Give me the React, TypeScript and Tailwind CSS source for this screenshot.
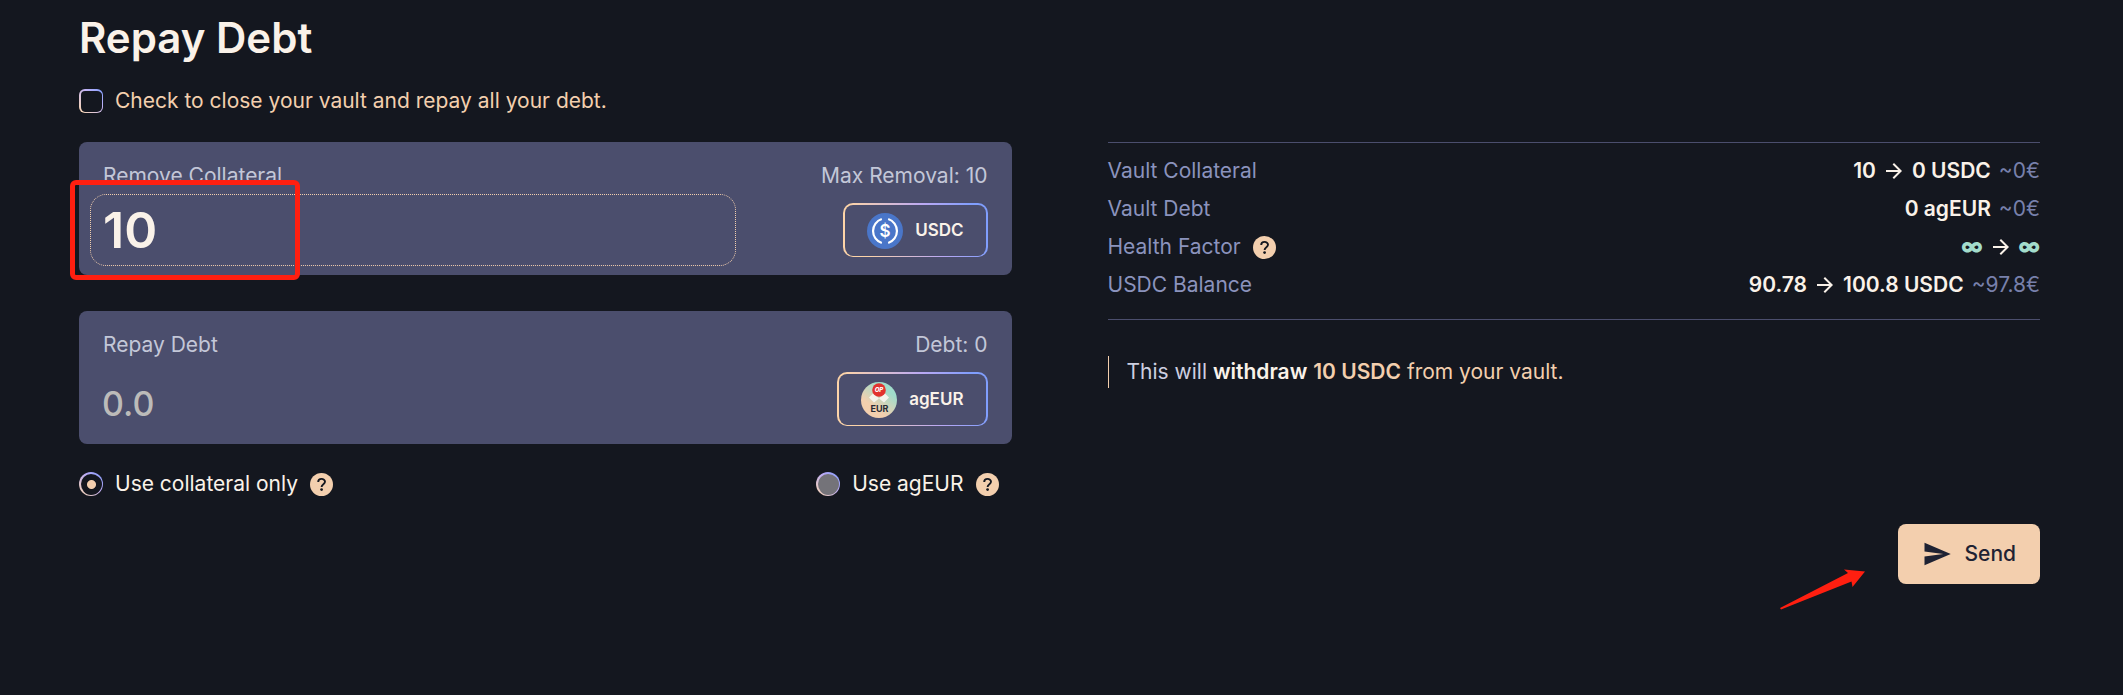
import { useState } from "react";
import { MdArrowForward, MdSend } from "react-icons/md";

export default function App() {
  const [closeVault, setCloseVault] = useState(false);
  const [collateral, setCollateral] = useState("10");
  const [debt, setDebt] = useState("");
  const [source, setSource] = useState("collateral");

  return (
    <main className="min-h-screen bg-[#14171f] pt-3 pr-[83px] pb-12 pl-[79px] font-['Inter','Liberation_Sans',sans-serif] text-[21px] text-[#faf2e9]">
      <h1 className="text-[42px] leading-[52px] font-semibold">Repay Debt</h1>

      <label className="mt-[25px] flex h-6 w-fit items-center gap-3 text-[#f3cfae]">
        <input
          type="checkbox"
          checked={closeVault}
          onChange={(e) => setCloseVault(e.target.checked)}
          className="h-6 w-6 appearance-none rounded-md border border-t-2 border-l-2 border-transparent [background:linear-gradient(#14171f,#14171f)_padding-box,linear-gradient(45deg,#fdd9ae,#c5b5f5_60%,#7f9cff)_border-box] checked:[background:linear-gradient(#f3cfae,#f3cfae)_padding-box,linear-gradient(45deg,#fdd9ae,#c5b5f5_60%,#7f9cff)_border-box]"
        />
        Check to close your vault and repay all your debt.
      </label>

      <div className="mt-[29px] grid grid-cols-2 gap-24">
        {/* Amounts */}
        <section>
          <div className="relative rounded-lg bg-[#4b4e6d] pt-5 pb-[9px]">
            <div className="flex justify-between px-6 leading-7 text-[#c3c7d8]">
              <label htmlFor="collateral">Remove Collateral</label>
              <span>Max Removal: 10</span>
            </div>
            <div className="mt-1 flex items-center justify-between pr-6 pl-[11px]">
              <input
                id="collateral"
                value={collateral}
                onChange={(e) => setCollateral(e.target.value)}
                className="h-[72px] w-[72%] rounded-2xl border border-dotted border-[#f3cfae] bg-transparent px-3 text-[50px] font-semibold outline-none"
              />
              <TokenButton icon={<UsdcIcon />} label="USDC" />
            </div>
            {/* Highlight around the amount */}
            <div className="pointer-events-none absolute top-[38px] -left-[9px] h-[100px] w-[230px] rounded-md border-5 border-[#ff1f10]" />
          </div>

          <div className="mt-9 rounded-lg bg-[#4b4e6d] pt-5 pb-[9px]">
            <div className="flex justify-between px-6 leading-7 text-[#c3c7d8]">
              <label htmlFor="debt">Repay Debt</label>
              <span>Debt: 0</span>
            </div>
            <div className="mt-1 flex items-center justify-between pr-6 pl-[11px]">
              <input
                id="debt"
                placeholder="0.0"
                value={debt}
                onChange={(e) => setDebt(e.target.value)}
                className="h-[72px] w-[70%] bg-transparent px-3 pt-2 text-[34px] font-medium outline-none placeholder:text-[#bcbbb9]"
              />
              <TokenButton icon={<AgEurIcon />} label="agEUR" />
            </div>
          </div>

          <div className="mt-7 flex h-6 items-center justify-between pr-[13px]">
            <SourceOption
              label="Use collateral only"
              checked={source === "collateral"}
              onSelect={() => setSource("collateral")}
            />
            <SourceOption
              label="Use agEUR"
              checked={source === "ageur"}
              onSelect={() => setSource("ageur")}
            />
          </div>
        </section>

        {/* Summary */}
        <section>
          <dl className="border-y border-[#4b4e6d] pt-[9px] pb-[15px]">
            <SummaryRow label="Vault Collateral">
              <b className="font-semibold">10</b>
              <Arrow />
              <b className="font-semibold">0 USDC</b>
              <Approx value="~0€" />
            </SummaryRow>
            <SummaryRow label="Vault Debt">
              <b className="font-semibold">0 agEUR</b>
              <Approx value="~0€" />
            </SummaryRow>
            <SummaryRow label="Health Factor" help>
              <b className="font-black text-[#a3dccb]">∞</b>
              <Arrow />
              <b className="font-black text-[#a3dccb]">∞</b>
            </SummaryRow>
            <SummaryRow label="USDC Balance">
              <b className="font-semibold">90.78</b>
              <Arrow />
              <b className="font-semibold">100.8 USDC</b>
              <Approx value="~97.8€" />
            </SummaryRow>
          </dl>
          <p className="mt-9 border-l border-[#f3cfae] pl-[18px] leading-8 text-[#f3cfae]">
            <span className="text-[#cdcfe0]">This will</span> <b className="font-semibold text-[#faf2e9]">withdraw</b>{" "}
            <b className="font-semibold">10 USDC</b> from your vault.
          </p>
        </section>
      </div>

      <div className="mt-7 flex justify-end">
        <div className="relative">
          <button
            type="button"
            className="flex h-[60px] items-center gap-3 rounded-lg bg-[#f3cfae] px-6 font-medium text-[#1e2233]"
          >
            <MdSend className="size-[30px]" />
            Send
          </button>
          {/* Pointer to the send button */}
          <svg className="absolute top-[43px] -left-[120px]" width="90" height="46" viewBox="0 0 90 46" fill="#ff1f10">
            <path d="M2 41 L70 6 L66 2.500 L87 4.500 L74.500 20 L73.500 14.500 L3 42.500 Z" />
          </svg>
        </div>
      </div>
    </main>
  );
}

function TokenButton({ icon, label }: { icon: React.ReactNode; label: string }) {
  return (
    <button
      type="button"
      className="flex h-[54px] items-center gap-3 rounded-[10px] border-2 border-b border-transparent px-[22px] text-[17px] font-semibold [background:linear-gradient(#4b4e6d,#4b4e6d)_padding-box,linear-gradient(70deg,#fdd4a8,#fdd4a8_15%,#bba9f3_60%,#809efd_90%)_border-box]"
    >
      {icon}
      {label}
    </button>
  );
}

function SourceOption({ label, checked, onSelect }: { label: string; checked: boolean; onSelect: () => void }) {
  return (
    <div className="flex items-center gap-3">
      <label className="flex items-center gap-3">
        <input
          type="radio"
          name="source"
          checked={checked}
          onChange={onSelect}
          className="h-6 w-6 appearance-none rounded-full border border-t-2 border-l-2 border-transparent [background:linear-gradient(#747379,#747379)_padding-box,linear-gradient(45deg,#fdd9ae,#b9aaf5_60%,#7f9cff)_border-box] checked:[background:radial-gradient(circle,#f3cfae_4px,#14171f_5px)_padding-box,linear-gradient(45deg,#fdd9ae,#b9aaf5_60%,#7f9cff)_border-box]"
        />
        {label}
      </label>
      <HelpIcon />
    </div>
  );
}

function SummaryRow({ label, help = false, children }: { label: string; help?: boolean; children: React.ReactNode }) {
  return (
    <div className="flex h-[38px] items-center justify-between">
      <dt className="flex items-center gap-3 text-[#8b93bd]">
        {label}
        {help && <HelpIcon />}
      </dt>
      <dd className="flex items-center">{children}</dd>
    </div>
  );
}

function HelpIcon() {
  return (
    <svg width="23" height="23" viewBox="0 0 23 23">
      <circle cx="11.500" cy="11.500" r="11.500" fill="#f3cfae" />
      <path d="M8.200 9 C8.200 4.800 15 5 15 8.800 C15 11.200 11.600 11.200 11.600 14" fill="none" stroke="#14171f" strokeWidth="1.900" />
      <circle cx="11.600" cy="16.600" r="1.400" fill="#14171f" />
    </svg>
  );
}

function Arrow() {
  return <MdArrowForward className="mx-[6px] size-6" />;
}

function Approx({ value }: { value: string }) {
  return <span className="ml-2 text-[#7880ab]">{value}</span>;
}

function UsdcIcon() {
  return (
    <svg width="36" height="36" viewBox="0 0 36 36">
      <circle cx="18" cy="18" r="18" fill="#4a76c9" />
      <g fill="none" stroke="#fff" strokeWidth="2.200">
        <path d="M14.800 6 A12.600 12.600 0 0 0 14.800 30" />
        <path d="M21.200 6 A12.600 12.600 0 0 1 21.200 30" />
      </g>
      <text x="18" y="24" textAnchor="middle" fontSize="17" fontWeight="600" fill="#fff">
        $
      </text>
    </svg>
  );
}

function AgEurIcon() {
  return (
    <svg width="36" height="36" viewBox="0 0 36 36">
      <defs>
        <linearGradient id="ageur" x1="0.200" y1="0.900" x2="0.800" y2="0.100">
          <stop offset="0.250" stopColor="#f3cfae" />
          <stop offset="0.850" stopColor="#a0dccb" />
        </linearGradient>
      </defs>
      <circle cx="18" cy="18" r="18" fill="url(#ageur)" />
      <path d="M8 15.500 L12.500 11 L18 16.500 L23.500 11 L28 15.500 L23 20.500 L18 16.500 L13 20.500 Z" fill="#f5f3ec" />
      <circle cx="18" cy="8" r="6.800" fill="#e2322e" />
      <text x="18" y="10" textAnchor="middle" fontSize="6" fontWeight="800" fontStyle="italic" fill="#fff">
        OP
      </text>
      <text x="18.500" y="29.500" textAnchor="middle" fontSize="9" fontWeight="700" fill="#262a35">
        EUR
      </text>
    </svg>
  );
}
